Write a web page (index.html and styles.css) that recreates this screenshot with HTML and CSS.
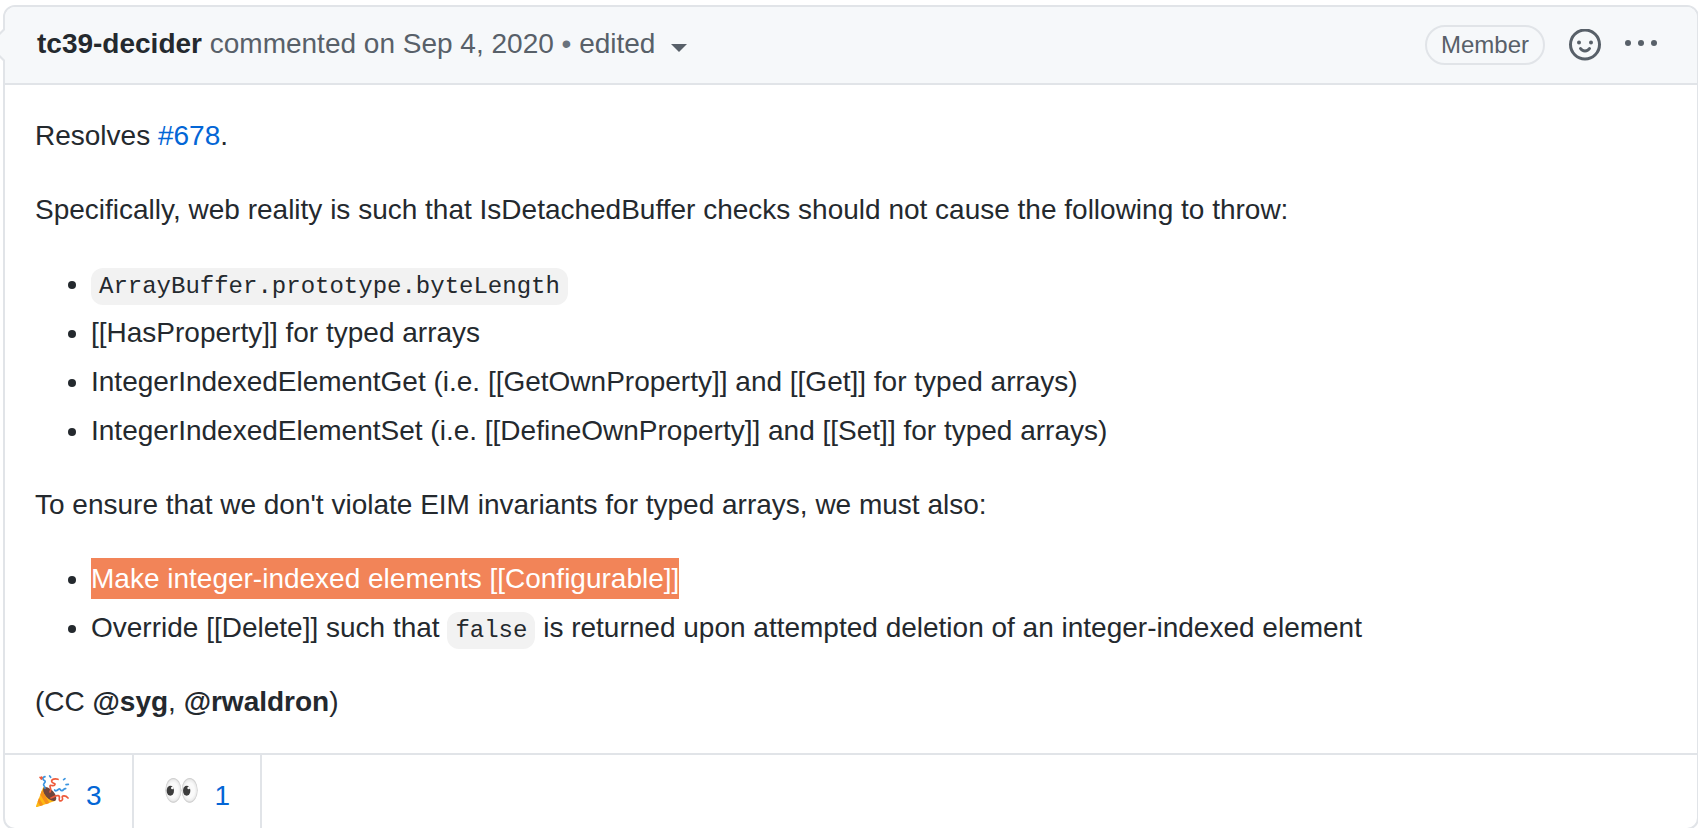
FILE: index.html
```
<!DOCTYPE html>
<html lang="en">
<head>
    <meta charset="utf-8">
    <title>tc39-decider commented on Sep 4, 2020</title>
    <link rel="stylesheet" href="styles.css">
</head>

<body>
    <article class="comment">
        <header class="comment-header">
            <h3 class="comment-title">
                <a class="author" href="#">tc39-decider</a>
                commented <a class="muted-link" href="#">on Sep 4, 2020</a>
                <span class="dot">•</span>
                <button class="edited" type="button">edited <span class="caret"></span></button>
            </h3>
            <div class="comment-actions">
                <span class="label">Member</span>
                <button class="icon-btn" type="button" aria-label="Add your reaction">
                    <svg width="32" height="32" viewBox="0 0 32 32" fill="none" stroke="currentColor" stroke-width="3" stroke-linecap="round">
                        <circle cx="16" cy="15.5" r="14.5"/>
                        <path d="M11.5 19.5c2 3.2 7 3.2 9 0"/>
                        <circle cx="10" cy="13.5" r="2" fill="currentColor" stroke="none"/>
                        <circle cx="22" cy="13.5" r="2" fill="currentColor" stroke="none"/>
                    </svg>
                </button>
                <button class="icon-btn" type="button" aria-label="Show options">
                    <svg width="32" height="32" viewBox="0 0 32 32" fill="currentColor">
                        <circle cx="3" cy="14" r="3"/>
                        <circle cx="16" cy="14" r="3"/>
                        <circle cx="29" cy="14" r="3"/>
                    </svg>
                </button>
            </div>
        </header>

        <div class="comment-body">
            <p>Resolves <a href="#">#678</a>.</p>
            <p>Specifically, web reality is such that IsDetachedBuffer checks should not cause the following to throw:</p>
            <ul>
                <li><code>ArrayBuffer.prototype.byteLength</code></li>
                <li>[[HasProperty]] for typed arrays</li>
                <li>IntegerIndexedElementGet (i.e. [[GetOwnProperty]] and [[Get]] for typed arrays)</li>
                <li>IntegerIndexedElementSet (i.e. [[DefineOwnProperty]] and [[Set]] for typed arrays)</li>
            </ul>
            <p>To ensure that we don't violate EIM invariants for typed arrays, we must also:</p>
            <ul>
                <li><mark>Make integer-indexed elements [[Configurable]]</mark></li>
                <li>Override [[Delete]] such that <code>false</code> is returned upon attempted deletion of an integer-indexed element</li>
            </ul>
            <p>(CC <a class="mention" href="#">@syg</a>, <a class="mention" href="#">@rwaldron</a>)</p>
        </div>

        <footer class="reactions">
            <button class="reaction" type="button">
                <!-- party popper -->
                <svg width="34" height="34" viewBox="18 21 102 102" fill="none" stroke-width="5" stroke-linecap="round" aria-hidden="true">
                    <path d="M40 56L18 114q-1 4 4 3L77 98z" fill="#fdb913"/>
                    <path d="M36 67l22 38-10 4-17-29zM27 90l13 21-9 3-8-13z" fill="#f58f1a"/>
                    <ellipse cx="59" cy="78" rx="13" ry="26" transform="rotate(-42 59 78)" fill="#70453b"/>
                    <path d="M45 26c-10 3-7 9-1 12s-6 10-3 14 4 4 4 9" stroke="#3c95e0"/>
                    <path d="M84 34c-8-3-20-1-19 6s14 5 9 11-14-3-14 4 6 6 0 17" stroke="#ee5a3a"/>
                    <path d="M74 66c4 6 9-1 13-3s4 6 9 5 5-7 11-6" stroke="#3c95e0"/>
                    <path d="M63 90c8-2 14-9 22-7s-1 12 4 15 11-3 8-9 9-9 17 1" stroke="#ee5a3a"/>
                    <path d="M30 28l4 5M35 27l1 2" stroke="#ee5a3a"/>
                    <path d="M59 24l3 4M105 32l-4 3M108 50l7-1" stroke="#3c95e0"/>
                </svg>
                <span>3</span>
            </button>
            <button class="reaction" type="button">
                <!-- eyes -->
                <svg width="34" height="34" viewBox="18 21 102 102" aria-hidden="true">
                    <defs>
                        <radialGradient id="eyeball">
                            <stop offset="0.6" stop-color="#fafafa"/>
                            <stop offset="0.85" stop-color="#ececec"/>
                            <stop offset="1" stop-color="#c4c4c4"/>
                        </radialGradient>
                    </defs>
                    <ellipse cx="43" cy="67" rx="24" ry="37" fill="url(#eyeball)"/>
                    <ellipse cx="92" cy="67" rx="24" ry="37" fill="url(#eyeball)"/>
                    <ellipse cx="34" cy="68" rx="11" ry="15" fill="#3d3d3d"/>
                    <ellipse cx="83" cy="68" rx="11" ry="15" fill="#3d3d3d"/>
                    <circle cx="40" cy="60" r="4" fill="#fafafa"/>
                    <circle cx="89" cy="60" r="4" fill="#fafafa"/>
                </svg>
                <span>1</span>
            </button>
        </footer>
    </article>
</body>

</html>
```
FILE: styles.css
```
* {
    box-sizing: border-box;
}

html {
    overflow: hidden;
}

body {
    margin: 0;
    padding: 5px 0 0 3px;
    background: #fff;
    color: #24292e;
    font-family: "Liberation Sans", Arial, sans-serif;
    font-size: 28px;
    line-height: 1.5;
}

a {
    color: #0366d6;
    text-decoration: none;
}

button {
    padding: 0;
    border: 0;
    background: none;
    color: inherit;
    font: inherit;
    cursor: pointer;
}

.comment {
    position: relative;
    margin-right: -1px;
    border: 2px solid #e1e4e8;
    border-radius: 12px;
}

/* speech bubble arrow: border colour first, header colour over it */
.comment::before,
.comment::after {
    position: absolute;
    top: 22px;
    left: -18px;
    width: 16px;
    height: 32px;
    content: "";
    background: #e1e4e8;
    clip-path: polygon(0 50%, 100% 0, 100% 100%);
}

.comment::after {
    left: -15px;
    background: #f6f8fa;
}

/* header */
.comment-header {
    display: flex;
    align-items: center;
    justify-content: space-between;
    padding: 16px 40px 16px 32px;
    border-bottom: 2px solid #e1e4e8;
    border-radius: 10px 10px 0 0;
    background: #f6f8fa;
    color: #586069;
}

.comment-title {
    margin: 0;
    padding-bottom: 2px;
    font-size: 28px;
    font-weight: 400;
}

.author {
    color: #24292e;
    font-weight: 700;
}

.muted-link {
    color: #586069;
}

.dot {
    color: #6a737d;
}

.caret {
    display: inline-block;
    margin-left: 8px;
    border: 8px solid transparent;
    border-top-color: currentColor;
    border-bottom: 0;
    vertical-align: 1px;
}

.comment-actions {
    display: flex;
    align-items: center;
    gap: 24px;
}

.label {
    padding: 0 14px;
    border: 2px solid #e1e4e8;
    border-radius: 40px;
    font-size: 24px;
    line-height: 36px;
}

.icon-btn,
.icon-btn svg {
    display: block;
}

/* body */
.comment-body {
    padding: 30px;
}

.comment-body p,
.comment-body ul {
    margin: 0 0 32px;
}

.comment-body p:last-child {
    margin-bottom: 0;
}

.comment-body ul {
    padding-left: 56px;
}

.comment-body li + li {
    margin-top: 7px;
}

code {
    padding: 5px 8px;
    border-radius: 12px;
    background: #f2f2f2;
    font-family: "Liberation Mono", Consolas, monospace;
    font-size: 24px;
}

mark {
    padding: 5px 0;
    background: #f28458;
    color: #fff;
}

.mention {
    color: #24292e;
    font-weight: 700;
}

/* reactions */
.reactions {
    display: flex;
    border-top: 2px solid #e1e4e8;
}

.reaction {
    display: flex;
    align-items: flex-start;
    gap: 16px;
    padding: 20px 30px 11px 31px;
    border-right: 2px solid #e1e4e8;
    color: #0366d6;
}
```
